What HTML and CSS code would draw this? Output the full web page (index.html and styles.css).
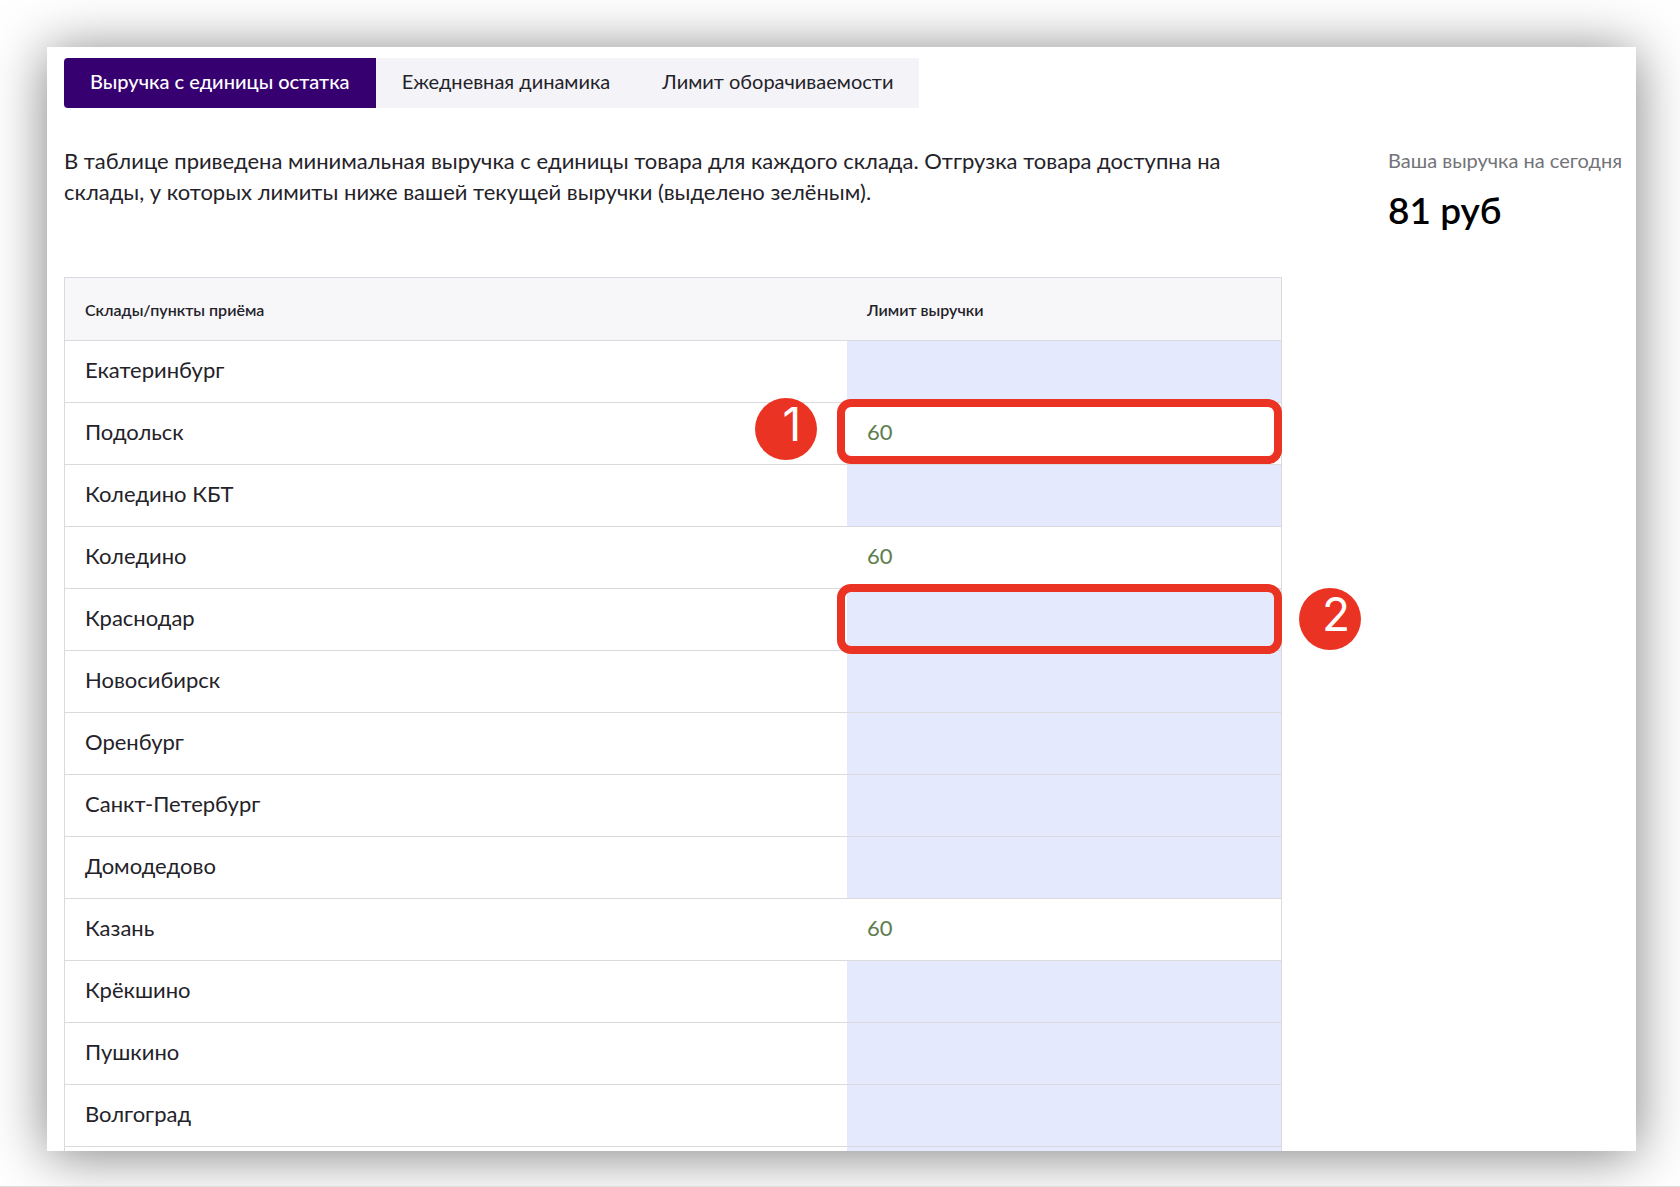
FILE: index.html
```html
<!DOCTYPE html>
<html lang="ru">
<head>
<meta charset="utf-8">
<meta name="viewport" content="width=device-width, initial-scale=1">
<title>Выручка с единицы остатка</title>
<link rel="stylesheet" href="styles.css">
</head>
<body>
<main class="card">
  <nav class="tabs">
    <button class="tab tab-active" type="button">Выручка с единицы остатка</button>
    <button class="tab" type="button">Ежедневная динамика</button>
    <button class="tab" type="button">Лимит оборачиваемости</button>
  </nav>
  <div class="content">
    <section class="report">
      <p class="intro">В таблице приведена минимальная выручка с единицы товара для каждого склада. Отгрузка товара доступна на склады, у которых лимиты ниже вашей текущей выручки (выделено зелёным).</p>
      <table class="limits">
        <thead>
          <tr><th class="name" scope="col">Склады/пункты приёма</th><th scope="col">Лимит выручки</th></tr>
        </thead>
        <tbody>
          <tr><td>Екатеринбург</td><td class="closed"></td></tr>
          <tr><td>Подольск</td><td class="open">60<span class="callout callout-first"><span class="badge badge-left">1</span></span></td></tr>
          <tr><td>Коледино КБТ</td><td class="closed"></td></tr>
          <tr><td>Коледино</td><td class="open">60</td></tr>
          <tr><td>Краснодар</td><td class="closed"><span class="callout callout-second"><span class="badge badge-right">2</span></span></td></tr>
          <tr><td>Новосибирск</td><td class="closed"></td></tr>
          <tr><td>Оренбург</td><td class="closed"></td></tr>
          <tr><td>Санкт-Петербург</td><td class="closed"></td></tr>
          <tr><td>Домодедово</td><td class="closed"></td></tr>
          <tr><td>Казань</td><td class="open">60</td></tr>
          <tr><td>Крёкшино</td><td class="closed"></td></tr>
          <tr><td>Пушкино</td><td class="closed"></td></tr>
          <tr><td>Волгоград</td><td class="closed"></td></tr>
          <tr><td></td><td class="closed"></td></tr>
        </tbody>
      </table>
    </section>
    <aside class="summary">
      <p class="summary-label">Ваша выручка на сегодня</p>
      <p class="summary-value">81 руб</p>
    </aside>
  </div>
</main>
</body>
</html>
```
FILE: styles.css
```css
* {
  box-sizing: border-box;
}

body {
  margin: 0;
  height: 100vh;
  padding: 47px 44px 35px 47px;
  overflow: hidden;
  background: #fff;
  border-bottom: 1px solid #dedede;
  color: #242229;
  font-family: Lato, "Open Sans", sans-serif;
}

.card {
  height: 100%;
  padding: 11px 14px 0 17px;
  overflow: hidden;
  background: #fff;
  box-shadow: 0 4px 52px rgba(0, 0, 0, 0.5);
}

.tabs {
  display: flex;
}

.tab {
  height: 50px;
  padding: 0 26px 4px;
  border: 0;
  background: #f4f4f8;
  color: #242229;
  font: 20px Lato, "Open Sans", sans-serif;
  white-space: nowrap;
}

.tab-active {
  border-radius: 4px 0 0 4px;
  background: #360071;
  color: #fff;
  font-weight: 500;
}

.content {
  display: grid;
  grid-template-columns: minmax(0, 1fr) auto;
  column-gap: 106px;
  padding-top: 37px;
}

.intro {
  margin: 0 0 70px;
  font-size: 22px;
  line-height: 31px;
}

.limits {
  width: 100%;
  table-layout: fixed;
  border: 1px solid #d9d9de;
  border-spacing: 0;
  font-size: 22px;
}

.limits th,
.limits td {
  position: relative;
  height: 62px;
  padding: 0 20px 4px;
  border-bottom: 1px solid #d9d9de;
  text-align: left;
}

.limits th {
  height: 63px;
  padding-bottom: 0;
  background: #f7f7fa;
  font-size: 16px;
  font-weight: 600;
}

.limits .name {
  width: 64.3%;
}

.limits .closed {
  background: #e4e9fe;
}

.limits .open {
  color: #5c7d4c;
}

.callout {
  position: absolute;
  z-index: 1;
  right: -1px;
  left: -10px;
  border: 8px solid #eb3323;
  border-radius: 14px;
}

.callout-first {
  top: -4px;
  bottom: 0;
}

.callout-second {
  top: -5px;
  bottom: -4px;
}

.badge {
  position: absolute;
  top: -9px;
  width: 62px;
  height: 62px;
  padding-left: 12px;
  border-radius: 50%;
  background: #eb3323;
  color: #fff;
  font: 46px/52px Inter, "Liberation Sans", sans-serif;
  text-align: center;
}

.badge-left {
  right: calc(100% + 28px);
}

.badge-right {
  top: -4px;
  left: calc(100% + 25px);
}

.summary-label {
  margin: 0;
  color: #737378;
  font-size: 20px;
  line-height: 31px;
}

.summary-value {
  margin: 12px 0 0;
  color: #000;
  font-size: 37px;
  font-weight: 600;
  line-height: 44px;
}
```
